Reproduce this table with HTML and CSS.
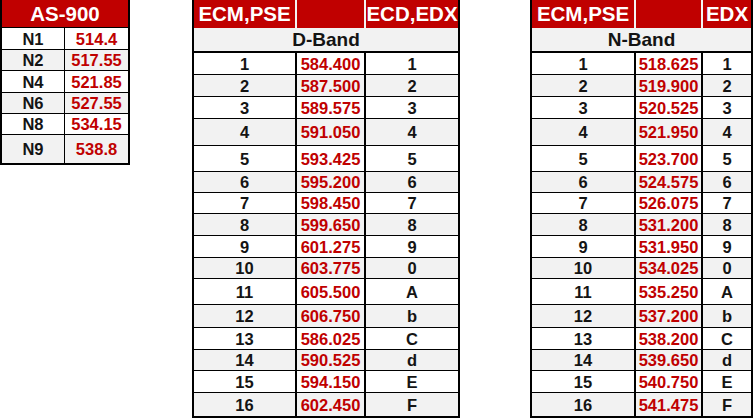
FILE: index.html
```html
<!DOCTYPE html>
<html>
<head>
<meta charset="utf-8">
<link rel="stylesheet" href="styles.css">
</head>
<body>
<div class="page">
  <table class="grid as900">
    <colgroup><col class="as-c1"><col class="as-c2"></colgroup>
    <tr class="h28 head"><td colspan="2" class="title">AS-900</td></tr>
    <tr class="h22"><td class="k">N1</td><td class="v">514.4</td></tr>
    <tr class="h21 alt"><td class="k">N2</td><td class="v">517.55</td></tr>
    <tr class="h22"><td class="k">N4</td><td class="v">521.85</td></tr>
    <tr class="h21 alt"><td class="k">N6</td><td class="v">527.55</td></tr>
    <tr class="h21"><td class="k">N8</td><td class="v">534.15</td></tr>
    <tr class="h28 alt last"><td class="k">N9</td><td class="v">538.8</td></tr>
  </table>

  <table class="grid band dband">
    <colgroup><col class="d-c1"><col class="d-c2"><col class="d-c3"></colgroup>
    <tr class="h28 head"><td class="hd">ECM,PSE</td><td class="hd"></td><td class="hd end">ECD,EDX</td></tr>
    <tr class="h25 alt bandrow"><td colspan="3" class="bandname">D-Band</td></tr>
    <tr class="h22"><td>1</td><td class="v">584.400</td><td class="end">1</td></tr>
    <tr class="h22 alt"><td>2</td><td class="v">587.500</td><td class="end">2</td></tr>
    <tr class="h22"><td>3</td><td class="v">589.575</td><td class="end">3</td></tr>
    <tr class="h27 alt"><td>4</td><td class="v">591.050</td><td class="end">4</td></tr>
    <tr class="h26"><td>5</td><td class="v">593.425</td><td class="end">5</td></tr>
    <tr class="h21 alt"><td>6</td><td class="v">595.200</td><td class="end">6</td></tr>
    <tr class="h21"><td>7</td><td class="v">598.450</td><td class="end">7</td></tr>
    <tr class="h22 alt"><td>8</td><td class="v">599.650</td><td class="end">8</td></tr>
    <tr class="h22"><td>9</td><td class="v">601.275</td><td class="end">9</td></tr>
    <tr class="h21 alt"><td>10</td><td class="v">603.775</td><td class="end">0</td></tr>
    <tr class="h26"><td>11</td><td class="v">605.500</td><td class="end">A</td></tr>
    <tr class="h23 alt"><td>12</td><td class="v">606.750</td><td class="end">b</td></tr>
    <tr class="h22"><td>13</td><td class="v">586.025</td><td class="end">C</td></tr>
    <tr class="h21 alt"><td>14</td><td class="v">590.525</td><td class="end">d</td></tr>
    <tr class="h22"><td>15</td><td class="v">594.150</td><td class="end">E</td></tr>
    <tr class="h23 alt last"><td>16</td><td class="v">602.450</td><td class="end">F</td></tr>
  </table>

  <table class="grid band nband">
    <colgroup><col class="n-c1"><col class="n-c2"><col class="n-c3"></colgroup>
    <tr class="h28 head"><td class="hd">ECM,PSE</td><td class="hd"></td><td class="hd end">EDX</td></tr>
    <tr class="h25 alt bandrow"><td colspan="3" class="bandname">N-Band</td></tr>
    <tr class="h22"><td>1</td><td class="v">518.625</td><td class="end">1</td></tr>
    <tr class="h22 alt"><td>2</td><td class="v">519.900</td><td class="end">2</td></tr>
    <tr class="h22"><td>3</td><td class="v">520.525</td><td class="end">3</td></tr>
    <tr class="h27 alt"><td>4</td><td class="v">521.950</td><td class="end">4</td></tr>
    <tr class="h26"><td>5</td><td class="v">523.700</td><td class="end">5</td></tr>
    <tr class="h21 alt"><td>6</td><td class="v">524.575</td><td class="end">6</td></tr>
    <tr class="h21"><td>7</td><td class="v">526.075</td><td class="end">7</td></tr>
    <tr class="h22 alt"><td>8</td><td class="v">531.200</td><td class="end">8</td></tr>
    <tr class="h22"><td>9</td><td class="v">531.950</td><td class="end">9</td></tr>
    <tr class="h21 alt"><td>10</td><td class="v">534.025</td><td class="end">0</td></tr>
    <tr class="h26"><td>11</td><td class="v">535.250</td><td class="end">A</td></tr>
    <tr class="h23 alt"><td>12</td><td class="v">537.200</td><td class="end">b</td></tr>
    <tr class="h22"><td>13</td><td class="v">538.200</td><td class="end">C</td></tr>
    <tr class="h21 alt"><td>14</td><td class="v">539.650</td><td class="end">d</td></tr>
    <tr class="h22"><td>15</td><td class="v">540.750</td><td class="end">E</td></tr>
    <tr class="h23 alt last"><td>16</td><td class="v">541.475</td><td class="end">F</td></tr>
  </table>
</div>
</body>
</html>
```

FILE: styles.css
```css
* { box-sizing: border-box; }
html, body { margin: 0; padding: 0; background: #ffffff; }
body {
  font-family: "Liberation Sans", Arial, sans-serif;
  font-weight: bold;
  color: #141414;
}
.page {
  display: flex;
  align-items: flex-start;
  width: 755px;
  height: 418px;
  overflow: hidden;
}
.grid {
  border-collapse: separate;
  border-spacing: 0;
  table-layout: fixed;
  border: 2px solid #000;
  border-top: 0;
  flex: none;
}
.grid td {
  padding: 0;
  text-align: center;
  vertical-align: middle;
  font-size: 16.5px;
  line-height: 18px;
  border-bottom: 1px solid #000;
  white-space: nowrap;
  overflow: hidden;
}
.grid tr.last td { border-bottom: 0; }
.alt td { background: #f2f2f2; }
.v { color: #c00000; }

.h21 { height: 21px; }
.h22 { height: 22px; }
.h23 { height: 23px; }
.h25 { height: 25px; }
.h26 { height: 26px; }
.h27 { height: 27px; }
.h28 { height: 28px; }

/* AS-900 */
.as900 { width: 130px; }
.as-c1 { width: 63px; }
.as-c2 { width: 63px; }
.as900 td.k { border-right: 1px solid #000; }
.as900 .title {
  background: #c00000;
  color: #ffffff;
  font-size: 20.5px;
  line-height: 22px;
}

/* Band tables */
.band td { border-right: 2px solid #000; }
.band td.end { border-right: 0; }
.band .head td {
  background: #c00000;
  color: #ffffff;
  font-size: 20.5px;
  line-height: 22px;
  border-bottom: 0;
  border-right: 2px solid #f4f4f4;
}
.band .head td.end { border-right: 0; }
.band .bandrow td {
  border-right: 0;
  border-bottom: 2px solid #000;
  font-size: 19px;
  line-height: 22px;
}

.dband { margin-left: 62px; width: 268px; }
.d-c1 { width: 103px; }
.d-c2 { width: 69px; }
.d-c3 { width: 92px; }

.nband { margin-left: 70px; width: 223px; }
.n-c1 { width: 104px; }
.n-c2 { width: 67px; }
.n-c3 { width: 48px; }
```
